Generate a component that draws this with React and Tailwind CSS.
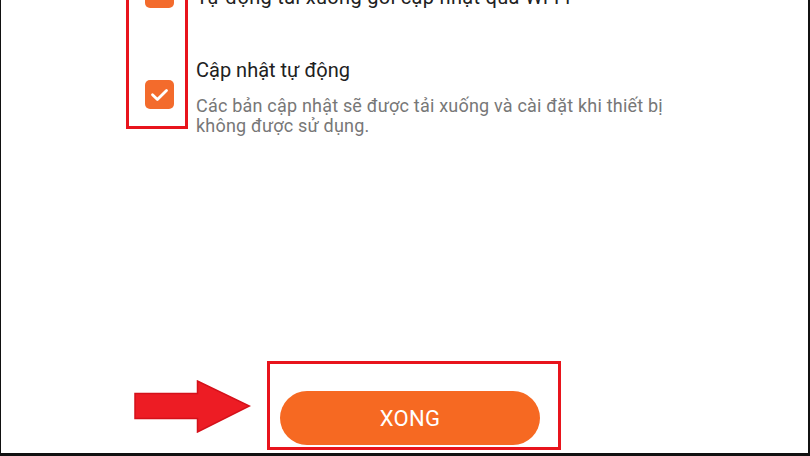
import React from "react";

function Check() {
  return (
    <div className="w-[29px] h-[29px] rounded-[5px] bg-[#f36b2c] flex items-center justify-center">
      <svg width="29" height="29" viewBox="0 0 29 29">
        <polyline points="7.5,14.8 12.4,19.6 21.5,10.5" fill="none" stroke="#ffffff" strokeWidth="2.8" strokeLinecap="round" strokeLinejoin="round" />
      </svg>
    </div>
  );
}

export default function App() {
  return (
    <div
      className="w-[810px] h-[456px] bg-white border-l border-r-2 border-b-[3px] border-[#111111] overflow-hidden flex flex-col"
      style={{ fontFamily: "Roboto, 'Noto Sans', sans-serif" }}
    >
      <div className="flex items-start h-[169px] shrink-0 mt-[-40px] pl-[125px]">
        <div className="w-[62px] border-[3px] border-[#e8141c] pl-[16px] pt-[16px] pb-[17px] flex flex-col gap-[72px]">
          <Check />
          <Check />
        </div>
        <div className="pl-[8px] pt-[25px] flex flex-col">
          <div className="text-[20px] leading-[24px] tracking-[0.3px] text-[#212121] whitespace-nowrap">
            Tự động tải xuống gói cập nhật qua Wi-Fi
          </div>
          <div className="mt-[49px] text-[20px] leading-[24px] text-[#212121] whitespace-nowrap">
            Cập nhật tự động
          </div>
          <div className="mt-[14px] text-[18px] leading-[20px] tracking-[0.2px] text-[#777777]">
            <div className="whitespace-nowrap">Các bản cập nhật sẽ được tải xuống và cài đặt khi thiết bị</div>
            <div className="whitespace-nowrap">không được sử dụng.</div>
          </div>
        </div>
      </div>
      <div className="flex items-start mt-[232px] pl-[133px] gap-[16px]">
        <svg width="117" height="53" viewBox="0 0 117 53" className="mt-[19px]">
          <polygon
            points="1,13.5 63.5,13.5 63.5,1 115.5,26 63.5,52 63.5,38.5 1,38.5"
            fill="#ed1c24"
            stroke="#d4111a"
            strokeWidth="1.5"
            strokeLinejoin="miter"
          />
        </svg>
        <div className="w-[294px] h-[89px] border-[3px] border-[#e8141c] pl-[10px] pt-[27px]">
          <div className="w-[260px] h-[54px] rounded-full bg-[#f66922] flex items-center justify-center text-white text-[22px] tracking-[0.3px]">
            XONG
          </div>
        </div>
      </div>
    </div>
  );
}
